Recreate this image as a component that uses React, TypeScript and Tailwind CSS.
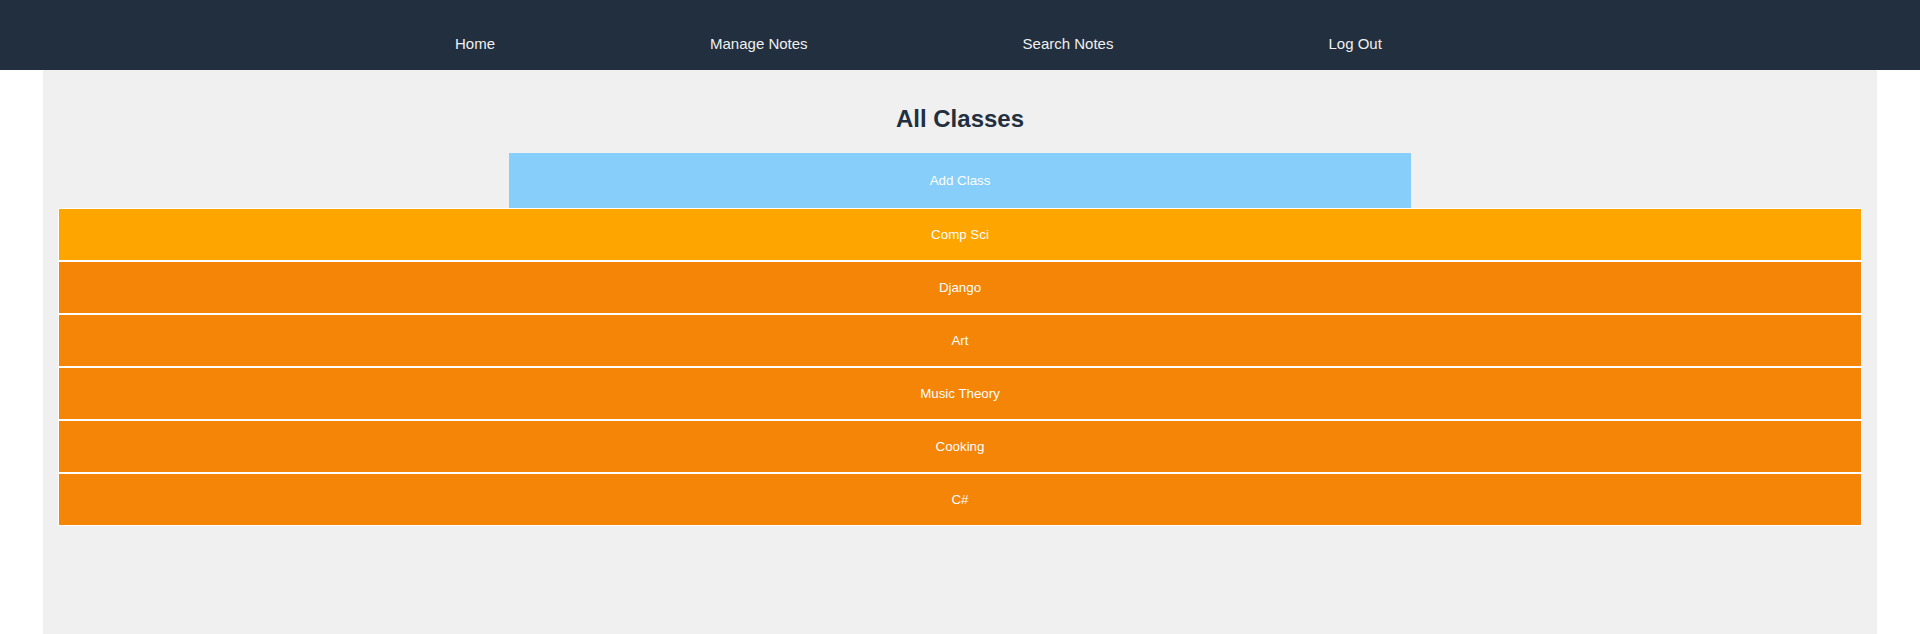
const links = ["Home", "Manage Notes", "Search Notes", "Log Out"];

const classes = [
  { id: 1, name: "Comp Sci", active: true },
  { id: 2, name: "Django", active: false },
  { id: 3, name: "Art", active: false },
  { id: 4, name: "Music Theory", active: false },
  { id: 5, name: "Cooking", active: false },
  { id: 6, name: "C#", active: false },
];

export default function App() {
  return (
    <div className="min-h-screen bg-white font-['Liberation_Sans',Arial,sans-serif]">
      <nav className="h-[70px] bg-[#222f3e] flex items-start pl-[455px] gap-[215px] pt-[34px]">
        {links.map((l) => (
          <a key={l} href="#" className="text-[15px] leading-[20px] text-[#f0f0f0]">
            {l}
          </a>
        ))}
      </nav>

      <main className="mx-[43px] h-[564px] bg-[#f0f0f0] px-[15px] pt-[35px]">
        <h2 className="text-center text-[24px] leading-[28px] font-bold text-[#222f3e]">
          All Classes
        </h2>

        <div className="mt-[20px] flex justify-center">
          <button className="w-1/2 h-[55px] bg-[#87cefa] text-white text-[13.333px]">
            Add Class
          </button>
        </div>

        <div className="flex flex-col">
          {classes.map((c) => (
            <button
              key={c.id}
              className={
                "w-full h-[53px] border border-white text-white text-[13.333px] " +
                (c.active ? "bg-[#ffa500]" : "bg-[#f48507]")
              }
            >
              {c.name}
            </button>
          ))}
        </div>
      </main>
    </div>
  );
}
